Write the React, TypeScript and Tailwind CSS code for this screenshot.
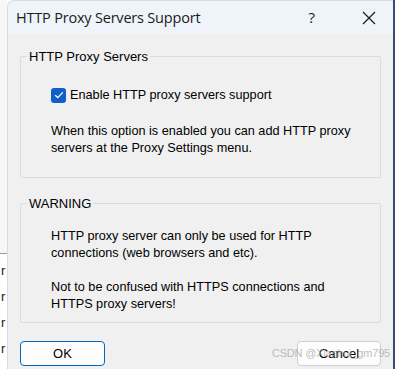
import React from "react";

const GroupBox = ({ title, children, className }: { title: string; children: React.ReactNode; className?: string }) => (
  <fieldset className={"border border-[#dcdcdc] rounded-[2px] " + (className ?? "")}>
    <legend className="ml-[6px] px-[2px] text-[13px] leading-[15px] text-black">{title}</legend>
    <div className="pl-[30px]">{children}</div>
  </fieldset>
);

export default function App() {
  return (
    <div className="w-[395px] h-[369px] flex overflow-hidden bg-white font-['Liberation_Sans',sans-serif]">
      {/* window behind the dialog */}
      <div className="w-[7px] flex flex-col">
        <div className="h-[253px] bg-[#f7f7f7]" />
        <div className="h-px bg-[#9a9a9a]" />
        <div className="flex flex-col gap-[12px] pt-[10px] pl-[1px] text-[13px] leading-[14px] text-[#222]">
          <span>r</span>
          <span>r</span>
          <span>r</span>
          <span>r</span>
        </div>
      </div>

      {/* dialog */}
      <div className="w-[386px] flex flex-col bg-[#f0f0f0] rounded-tl-[7px] border-l border-t border-[#d9dde2] relative">
        <div className="h-[33px] shrink-0 bg-[#eef4f9] rounded-tl-[7px] flex items-center pl-[8px] pr-[17px]">
          <span className="flex-1 text-[14.5px] text-[#1b1b1b] font-['Open_Sans',sans-serif] tracking-[-0.2px]">
            HTTP Proxy Servers Support
          </span>
          <span className="text-[15px] text-[#1b1b1b] mr-[47px] font-['Open_Sans',sans-serif]">?</span>
          <svg width="14" height="14" viewBox="0 0 14 14" className="text-[#1b1b1b]">
            <path d="M1 1L13 13M13 1L1 13" stroke="currentColor" strokeWidth="1.2" fill="none" />
          </svg>
        </div>

        <div className="flex flex-col pl-[12px] pr-[12px] pt-[15px] text-[12.7px] leading-[17px] text-black">
          <GroupBox title="HTTP Proxy Servers" className="h-[129px] pt-[23px]">
            <label className="flex items-center gap-[4px] h-[16px]">
              <span className="w-[15px] h-[15px] rounded-[3px] bg-[#0f5fc4] flex items-center justify-center">
                <svg width="10" height="8" viewBox="0 0 10 8">
                  <path d="M1.2 4.2L3.8 6.6L8.8 1.4" stroke="white" strokeWidth="1.3" fill="none" />
                </svg>
              </span>
              <span>Enable HTTP proxy servers support</span>
            </label>
            <p className="mt-[20px]">
              When this option is enabled you can add HTTP proxy
              <br />
              servers at the Proxy Settings menu.
            </p>
          </GroupBox>

          <GroupBox title="WARNING" className="h-[127px] mt-[18px] pt-[17px]">
            <p>
              HTTP proxy server can only be used for HTTP
              <br />
              connections (web browsers and etc).
            </p>
            <p className="mt-[17px]">
              Not to be confused with HTTPS connections and
              <br />
              HTTPS proxy servers!
            </p>
          </GroupBox>

          <div className="flex justify-between mt-[18px]">
            <button className="w-[85px] h-[25px] rounded-[4px] border border-[#0067c0] bg-[#fdfdfd] text-[13px] text-black">
              OK
            </button>
            <button className="w-[84px] h-[25px] rounded-[4px] border border-[#d0d0d0] bg-[#fdfdfd] text-[13px] text-black">
              Cancel
            </button>
          </div>
        </div>

        <span className="absolute right-[3px] bottom-[8px] text-[11px] text-[#a0a0a0]/70 tracking-[-0.2px]">
          CSDN @Xianhui_gm795
        </span>
      </div>

      <div className="w-[2px] bg-[#3a4a7a]" />
    </div>
  );
}
